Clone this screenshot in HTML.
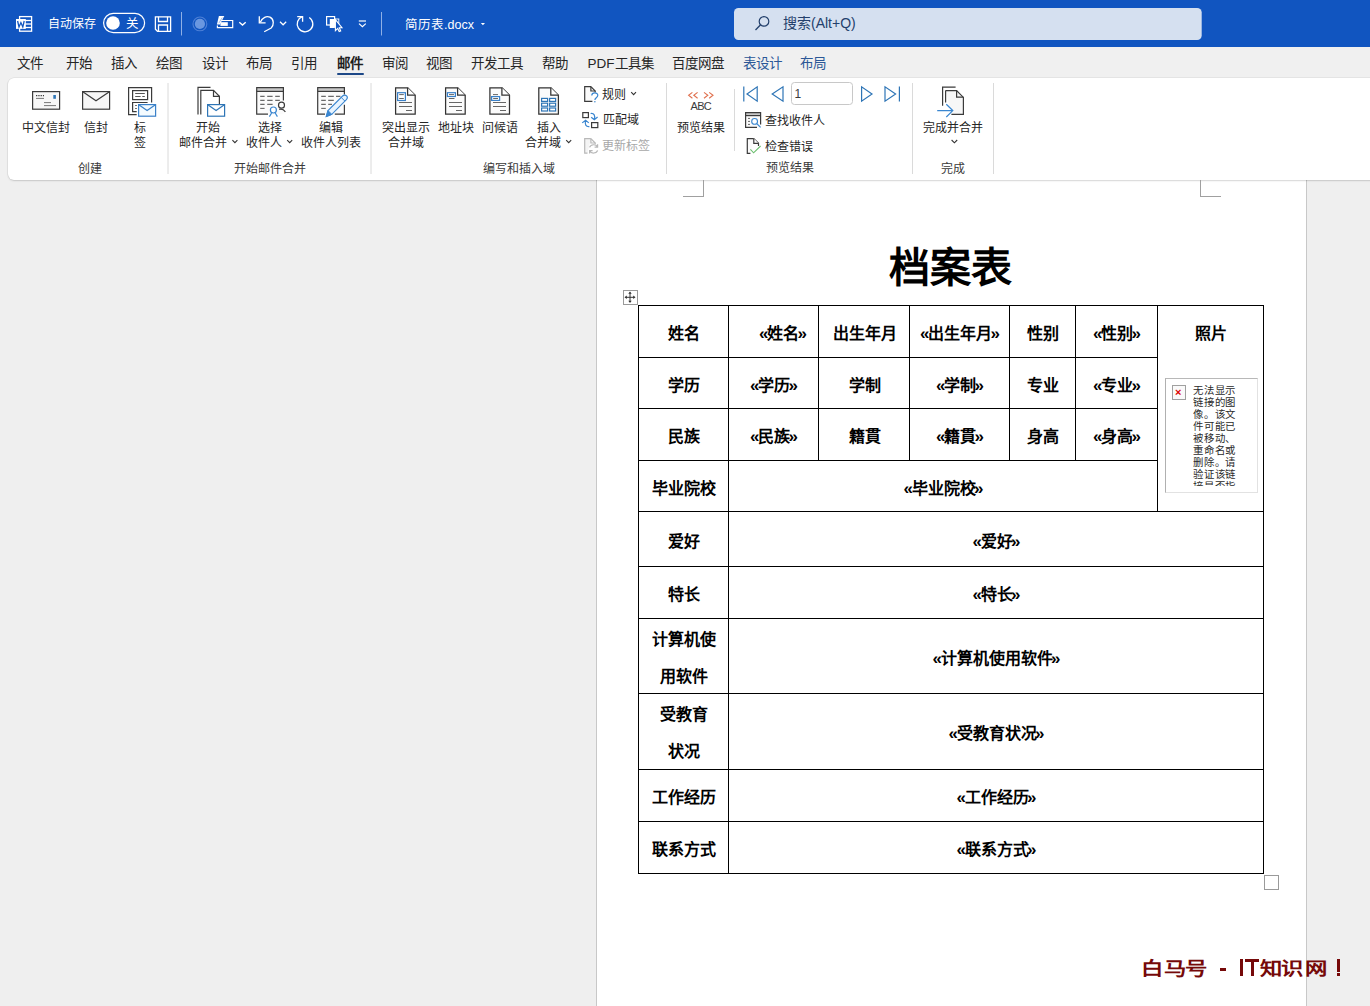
<!DOCTYPE html>
<html lang="zh-CN">
<head>
<meta charset="utf-8">
<style>
html,body{margin:0;padding:0}
body{width:1370px;height:1006px;overflow:hidden;position:relative;background:#efefef;font-family:"Liberation Sans",sans-serif;color:#262626}
.a{position:absolute;white-space:nowrap}
svg{position:absolute;overflow:visible}
#title{left:0;top:0;width:1370px;height:47px;background:#1155c0}
#tabs{left:0;top:47px;width:1370px;height:133px;background:#f0f0f0}
.tab{top:56px;font-size:13.5px;line-height:16px;color:#262626}
#ribbon{left:8px;top:78px;width:1380px;height:102px;background:#fff;border-radius:6px 0 0 6px;box-shadow:0 0 0 0.5px rgba(0,0,0,.09),0 1px 2px rgba(0,0,0,.13)}
.rt{font-size:12px;line-height:15px;color:#262626;text-align:center}
.gl{font-size:12px;line-height:15px;color:#3a3a3a}
.sep{width:1px;background:#d6d6d6}
#page{left:596px;top:180px;width:709px;height:830px;background:#fff;border-left:1px solid #c8c8c8;border-right:1px solid #c8c8c8}
.q1,.q2{font-style:normal;display:inline-block}
.q1{margin-right:-1.5px;font-size:17px;line-height:17px}
.q2{margin-left:-1.5px;font-size:17px;line-height:17px}
.wm{position:absolute;top:956.5px;width:18px;text-align:center;font-size:18px;line-height:24px;font-weight:900;color:#760909;transform:scale(1.24,1)}
.hl{position:absolute;height:1px;background:#000}
.vl{position:absolute;width:1px;background:#000}
.ct{position:absolute;font-size:16px;line-height:20px;margin:2px 0 0 1px;font-weight:bold;color:#000;text-align:center;white-space:nowrap}
</style>
</head>
<body>
<div id="title" class="a"></div>
<div id="tabs" class="a"></div>
<div id="page" class="a"></div>
<div id="ribbon" class="a"></div>




<!-- DOCUMENT -->
<div class="a" style="left:703px;top:180px;width:1px;height:16px;background:#a0a0a0"></div>
<div class="a" style="left:683px;top:196px;width:21px;height:1px;background:#a0a0a0"></div>
<div class="a" style="left:1200px;top:180px;width:1px;height:16px;background:#a0a0a0"></div>
<div class="a" style="left:1200px;top:196px;width:21px;height:1px;background:#a0a0a0"></div>
<div class="a" style="left:889px;top:242.5px;font-size:41px;line-height:50px;font-weight:900;color:#000">档案表</div>
<div class="a" style="left:623px;top:290px;width:13px;height:13px;border:1px solid #9a9a9a;background:#fff"></div>
<svg style="left:0;top:0" width="1370" height="1006">
<g stroke="#333" stroke-width="1" fill="#333">
<line x1="630" y1="292.5" x2="630" y2="302"/><line x1="625.5" y1="297.3" x2="634.5" y2="297.3"/>
<path d="M630 291.5 L628.3 293.8 H631.7 Z M630 303 L628.3 300.7 H631.7 Z M624.5 297.3 L626.8 295.6 V299 Z M635.5 297.3 L633.2 295.6 V299 Z" stroke="none"/>
</g></svg>
<div class="a" style="left:1264px;top:875px;width:13px;height:13px;border:1px solid #9a9a9a;background:#fff"></div>
<div class="hl" style="left:638px;top:305px;width:626px"></div>
<div class="hl" style="left:638px;top:873px;width:626px"></div>
<div class="hl" style="left:638px;top:357px;width:520px"></div>
<div class="hl" style="left:638px;top:408px;width:520px"></div>
<div class="hl" style="left:638px;top:460px;width:520px"></div>
<div class="hl" style="left:638px;top:511px;width:626px"></div>
<div class="hl" style="left:638px;top:566px;width:626px"></div>
<div class="hl" style="left:638px;top:618px;width:626px"></div>
<div class="hl" style="left:638px;top:693px;width:626px"></div>
<div class="hl" style="left:638px;top:769px;width:626px"></div>
<div class="hl" style="left:638px;top:821px;width:626px"></div>
<div class="vl" style="left:638px;top:305px;height:569px"></div>
<div class="vl" style="left:728px;top:305px;height:569px"></div>
<div class="vl" style="left:1263px;top:305px;height:569px"></div>
<div class="vl" style="left:818px;top:305px;height:156px"></div>
<div class="vl" style="left:909px;top:305px;height:156px"></div>
<div class="vl" style="left:1009px;top:305px;height:156px"></div>
<div class="vl" style="left:1075px;top:305px;height:156px"></div>
<div class="vl" style="left:1157px;top:305px;height:207px"></div>
<div class="ct" style="left:638px;width:90px;top:322.0px">姓名</div>
<div class="ct" style="left:737px;width:90px;top:322.0px"><i class="q1">«</i>姓名<i class="q2">»</i></div>
<div class="ct" style="left:818px;width:91px;top:322.0px">出生年月</div>
<div class="ct" style="left:909px;width:100px;top:322.0px"><i class="q1">«</i>出生年月<i class="q2">»</i></div>
<div class="ct" style="left:1009px;width:66px;top:322.0px">性别</div>
<div class="ct" style="left:1075px;width:82px;top:322.0px"><i class="q1">«</i>性别<i class="q2">»</i></div>
<div class="ct" style="left:1157px;width:106px;top:322.0px">照片</div>
<div class="ct" style="left:638px;width:90px;top:373.5px">学历</div>
<div class="ct" style="left:728px;width:90px;top:373.5px"><i class="q1">«</i>学历<i class="q2">»</i></div>
<div class="ct" style="left:818px;width:91px;top:373.5px">学制</div>
<div class="ct" style="left:909px;width:100px;top:373.5px"><i class="q1">«</i>学制<i class="q2">»</i></div>
<div class="ct" style="left:1009px;width:66px;top:373.5px">专业</div>
<div class="ct" style="left:1075px;width:82px;top:373.5px"><i class="q1">«</i>专业<i class="q2">»</i></div>
<div class="ct" style="left:638px;width:90px;top:425.0px">民族</div>
<div class="ct" style="left:728px;width:90px;top:425.0px"><i class="q1">«</i>民族<i class="q2">»</i></div>
<div class="ct" style="left:818px;width:91px;top:425.0px">籍貫</div>
<div class="ct" style="left:909px;width:100px;top:425.0px"><i class="q1">«</i>籍貫<i class="q2">»</i></div>
<div class="ct" style="left:1009px;width:66px;top:425.0px">身高</div>
<div class="ct" style="left:1075px;width:82px;top:425.0px"><i class="q1">«</i>身高<i class="q2">»</i></div>
<div class="ct" style="left:638px;width:90px;top:476.5px">毕业院校</div>
<div class="ct" style="left:728px;width:429px;top:476.5px"><i class="q1">«</i>毕业院校<i class="q2">»</i></div>
<div class="ct" style="left:638px;width:90px;top:529.5px">爱好</div>
<div class="ct" style="left:728px;width:535px;top:529.5px"><i class="q1">«</i>爱好<i class="q2">»</i></div>
<div class="ct" style="left:638px;width:90px;top:583.0px">特长</div>
<div class="ct" style="left:728px;width:535px;top:583.0px"><i class="q1">«</i>特长<i class="q2">»</i></div>
<div class="ct" style="left:638px;width:90px;top:619px;line-height:37px">计算机使<br>用软件</div>
<div class="ct" style="left:728px;width:535px;top:646.5px"><i class="q1">«</i>计算机使用软件<i class="q2">»</i></div>
<div class="ct" style="left:638px;width:90px;top:694.2px;line-height:37px">受教育<br>状况</div>
<div class="ct" style="left:728px;width:535px;top:722.0px"><i class="q1">«</i>受教育状况<i class="q2">»</i></div>
<div class="ct" style="left:638px;width:90px;top:786.0px">工作经历</div>
<div class="ct" style="left:728px;width:535px;top:786.0px"><i class="q1">«</i>工作经历<i class="q2">»</i></div>
<div class="ct" style="left:638px;width:90px;top:838.0px">联系方式</div>
<div class="ct" style="left:728px;width:535px;top:838.0px"><i class="q1">«</i>联系方式<i class="q2">»</i></div>
<div class="a" style="left:1165px;top:378px;width:91px;height:113px;border:1px solid #e2e2e2;border-top-color:#b8b8b8;border-left-color:#b0b0b0;background:#fff;overflow:hidden"></div>
<div class="a" style="left:1172px;top:385px;width:12px;height:13px;border:1px solid #a0a0a0;background:#fafafa"></div>
<div class="a" style="left:1175px;top:386px;font-size:11px;line-height:12px;color:#d00;font-weight:bold">×</div>
<div class="a" style="left:1193px;top:385px;width:46px;height:101px;overflow:hidden;font-size:10.4px;letter-spacing:0.8px;line-height:12px;color:#2a2a2a;white-space:normal;word-break:break-all">无法显示链接的图像。该文件可能已被移动、重命名或删除。请验证该链接是否指向正确的文件和位置。</div>
<div class="wm" style="left:1143.3px">白</div>
<div class="wm" style="left:1165.6px">马</div>
<div class="wm" style="left:1187.4px">号</div>
<div class="a" style="left:1220px;top:968px;width:6px;height:2.6px;background:#760909"></div>
<div class="a" style="left:1239.8px;top:959px;width:3.6px;height:17px;background:#760909"></div>
<div class="a" style="left:1245.2px;top:959px;width:14px;height:3.4px;background:#760909"></div><div class="a" style="left:1250.6px;top:959px;width:3.6px;height:17px;background:#760909"></div>
<div class="wm" style="left:1261.6px">知</div>
<div class="wm" style="left:1283.3px">识</div>
<div class="wm" style="left:1306.5px">网</div>
<div class="a" style="left:1337px;top:959px;width:3.2px;height:12.5px;background:#760909"></div><div class="a" style="left:1337px;top:973px;width:3.2px;height:3px;background:#760909"></div>

<!-- RIBBON -->
<svg style="left:0;top:0" width="1370" height="190">
<defs>
 <g id="doc"><path d="M0.6 0.6 H12.8 L20.2 8 V26.9 H0.6 Z" fill="#fbfbfb" stroke="#333" stroke-width="1.25"/><path d="M12.6 0.6 V8 H20.2" fill="#fff" stroke="#333" stroke-width="1.25"/></g>
</defs>
<g stroke-width="1.2" fill="none" stroke="#3b3b3b">
 <!-- separators -->
 <line x1="168" y1="83" x2="168" y2="174" stroke="#dadada" stroke-width="1"/>
 <line x1="371" y1="83" x2="371" y2="174" stroke="#dadada" stroke-width="1"/>
 <line x1="666.5" y1="83" x2="666.5" y2="174" stroke="#dadada" stroke-width="1"/>
 <line x1="734.5" y1="89" x2="734.5" y2="151" stroke="#dadada" stroke-width="1"/>
 <line x1="912.5" y1="83" x2="912.5" y2="174" stroke="#dadada" stroke-width="1"/>
 <line x1="993.5" y1="83" x2="993.5" y2="174" stroke="#dadada" stroke-width="1"/>
 <!-- 中文信封 -->
 <rect x="32.6" y="91.6" width="27" height="17.6" fill="#f7f7f7"/>
 <line x1="36" y1="95.6" x2="44" y2="95.6" stroke-dasharray="1.3 1"/>
 <line x1="36" y1="98.4" x2="44" y2="98.4" stroke="#777" stroke-width="1"/>
 <line x1="44" y1="102.6" x2="51" y2="102.6" stroke="#777" stroke-width="1"/>
 <line x1="44" y1="105.6" x2="56" y2="105.6" stroke="#777" stroke-width="1"/>
 <rect x="53.3" y="95" width="2.6" height="3.8" fill="#2e75b6" stroke="none"/>
 <!-- 信封 -->
 <rect x="82.6" y="91.6" width="27" height="17.6" fill="#f7f7f7"/>
 <path d="M82.8 91.8 L96 100.8 L109.4 91.8"/>
 <!-- 标签 -->
 <path d="M151.6 102.6 V87.6 H128.6 V114.6 H136.7"/>
 <rect x="132.6" y="90.6" width="15" height="9" fill="#fff"/>
 <g stroke="#555" stroke-width="1">
 <line x1="135.2" y1="93.5" x2="144.8" y2="93.5"/>
 <line x1="135.2" y1="96.5" x2="140.6" y2="96.5"/><line x1="142.3" y1="96.5" x2="144.8" y2="96.5"/>
 <line x1="135.2" y1="105.5" x2="136.8" y2="105.5"/><line x1="135.2" y1="108.5" x2="136.8" y2="108.5"/>
 </g>
 <path d="M147.6 102.5 H132.6 V111.6 H136.7"/>
 <rect x="138.6" y="104.6" width="17" height="11.6" fill="#f4fbff" stroke="#3a80c8"/>
 <path d="M138.8 104.8 L147.1 110.5 L155.4 104.8" stroke="#3a80c8"/>
 <!-- 开始邮件合并 -->
 <path d="M198 114.6 V87.4 H210.5"/>
 <path d="M200.8 114.6 V90.4 H213.5 L219.4 96.3 V104"/>
 <path d="M213.5 90.4 V96.3 H219.4"/>
 <rect x="207.6" y="104.6" width="17" height="11.6" fill="#fff" stroke="#2e75b6"/>
 <path d="M207.8 104.8 L216.1 110.5 L224.4 104.8" stroke="#2e75b6"/>
 <!-- 选择收件人 -->
 <rect x="256.6" y="87.6" width="27" height="26.6" fill="#fbfbfb" stroke="none"/>
 <rect x="256.8" y="87.8" width="26.6" height="3.4" fill="#c8c8c8" stroke="none"/>
 <path d="M283.4 100.4 V87.7 H256.7 V114.2 H268"/>
 <line x1="256.7" y1="91.4" x2="283.4" y2="91.4"/>
 <g stroke="#6a6a6a" stroke-width="1.1">
  <path d="M260.2 96.4 H264.6 M267.2 96.4 H272.6 M275.2 96.4 H279.8"/>
  <path d="M260.2 100.4 H264.6 M267.2 100.4 H272.6 M275.2 100.4 H279.8"/>
  <path d="M260.2 104.4 H264.6 M267.2 104.4 H272.6"/>
  <path d="M260.2 108.4 H264.6"/>
 </g>
 <circle cx="281.5" cy="105.2" r="3" fill="#fff"/>
 <path d="M279.2 109.4 C281.5 108.6 283.6 109.4 285.4 111.8"/>
 <circle cx="273.4" cy="110" r="3" fill="#fff" stroke="#3a86d0"/>
 <path d="M269.4 116.6 L271.6 113 M277.4 116.6 L275.2 113" stroke="#3a86d0"/>
 <!-- 编辑收件人列表 -->
 <rect x="317.6" y="87.6" width="27" height="26.6" fill="#fbfbfb" stroke="none"/>
 <rect x="317.8" y="87.8" width="26.6" height="3.4" fill="#c8c8c8" stroke="none"/>
 <path d="M344.4 94.6 V87.7 H317.7 V114.2 H325 M334.8 114.2 H344.4 V104.8"/>
 <line x1="317.7" y1="91.4" x2="344.4" y2="91.4"/>
 <g stroke="#6a6a6a" stroke-width="1.1">
  <path d="M321.2 96.4 H325.8 M328.2 96.4 H333.8 M336 96.4 H340.4"/>
  <path d="M321.2 100.4 H325.8 M328.2 100.4 H333.8"/>
  <path d="M321.2 104.4 H325.8 M328.2 104.4 H332"/>
  <path d="M321.2 108.4 H325.8"/>
 </g>
 <path d="M326.2 116.6 L328 110.6 L342.6 96 C343.8 94.8 345.6 94.8 346.6 95.9 C347.6 97 347.4 98.6 346.4 99.6 L331.8 114.4 Z" fill="#e8f4ff" stroke="#3a86d0" stroke-width="1.1"/>
 <path d="M326.2 116.6 L328 110.6 L331.8 114.4 Z" fill="#3a86d0" stroke="#3a86d0" stroke-width="1"/>
 <line x1="341.2" y1="97.4" x2="345" y2="101.2" stroke="#3a86d0" stroke-width="1"/>
 <!-- 突出显示合并域 -->
 <use href="#doc" x="395" y="87.2"/>
 <rect x="397.6" y="92.7" width="7.8" height="7.8" fill="#fff" stroke="#3a80c8"/>
 <g stroke="#666" stroke-width="1">
 <line x1="399.2" y1="94.6" x2="403.8" y2="94.6"/><line x1="399.2" y1="98.5" x2="403.8" y2="98.5"/>
 <line x1="399" y1="102.5" x2="412" y2="102.5"/><line x1="399" y1="106.5" x2="412" y2="106.5"/><line x1="406" y1="110.5" x2="412" y2="110.5"/>
 </g>
 <!-- 地址块 -->
 <use href="#doc" x="445" y="87.2"/>
 <rect x="447.4" y="92.7" width="8" height="3.8" fill="#fff" stroke="#3a80c8"/>
 <g stroke="#666" stroke-width="1">
 <line x1="449" y1="94.6" x2="454" y2="94.6"/><line x1="449" y1="98.5" x2="454.5" y2="98.5"/>
 <line x1="449" y1="102.5" x2="462" y2="102.5"/><line x1="449" y1="106.5" x2="462" y2="106.5"/><line x1="456" y1="110.5" x2="462" y2="110.5"/>
 </g>
 <!-- 问候语 -->
 <use href="#doc" x="489.3" y="87.2"/>
 <rect x="491.6" y="96.6" width="8" height="3.8" fill="#fff" stroke="#3a80c8"/>
 <g stroke="#666" stroke-width="1">
 <line x1="493" y1="94.6" x2="498" y2="94.6"/><line x1="493.2" y1="98.5" x2="498" y2="98.5"/>
 <line x1="493" y1="102.5" x2="506" y2="102.5"/><line x1="493" y1="106.5" x2="506" y2="106.5"/><line x1="500" y1="110.5" x2="506" y2="110.5"/>
 </g>
 <!-- 插入合并域 -->
 <use href="#doc" x="538.2" y="87.2"/>
 <g fill="#fff" stroke="#2e75b6">
  <rect x="541.6" y="98.4" width="6" height="3"/><rect x="549.6" y="98.4" width="6" height="3"/>
  <rect x="541.6" y="103.2" width="6" height="3"/><rect x="549.6" y="103.2" width="6" height="3"/>
  <rect x="541.6" y="108" width="6" height="3"/><rect x="549.6" y="108" width="6" height="3"/>
 </g>
 <!-- 规则 -->
 <path d="M591 86.7 H584.7 V101.3 H592.4" fill="#fafafa"/>
 <path d="M590.9 86.7 L595.2 91 V92.4" />
 <path d="M590.9 86.7 V91 H595.2" />
 <path d="M591.8 95.4 C591.8 92.2 597.8 92 597.8 95.3 C597.8 97.8 594.9 97.8 594.9 100" stroke="#3a86d0"/>
 <circle cx="594.9" cy="101.7" r="0.75" fill="#3a86d0" stroke="none"/>
 <!-- 匹配域 -->
 <rect x="582.8" y="112.6" width="5.6" height="5" fill="#fff"/>
 <rect x="591.6" y="122.6" width="6.2" height="5" fill="#fff"/>
 <path d="M590.6 113.5 C594.2 113 595.4 115.6 594.3 119.4 M591.2 117.2 L594.3 119.8 L597.6 117" stroke="#3a86d0"/>
 <path d="M589.4 126.6 C585.8 127 584.6 124.4 585.6 120.6 M582.2 122.9 L585.6 120.2 L588.8 122.9" stroke="#3a86d0"/>
 <!-- 更新标签 (disabled) -->
 <g stroke="#b8b8b8">
 <path d="M590.9 138.7 H584.7 V153.2 H587.5" fill="#f4f4f4"/>
 <path d="M590.9 138.7 L595.2 143 V144.2"/>
 <path d="M590.9 138.7 V143 H595.2"/>
 <path d="M589.6 147.4 C590.6 144.2 596 143.8 597.4 146.8 M597.6 144.2 V147.2 H594.6"/>
 <path d="M597.6 150.4 C596.6 153.6 591.2 154 589.8 151 M589.6 153.6 V150.6 H592.6"/>
 </g>
 <!-- 预览结果 -->
 <g stroke="#e0714f" stroke-width="1.1">
  <path d="M692.4 92.4 L688.6 95.3 L692.4 98.2 M697.6 92.4 L693.8 95.3 L697.6 98.2"/>
  <path d="M704 92.4 L707.8 95.3 L704 98.2 M709.2 92.4 L713 95.3 L709.2 98.2"/>
 </g>
 <!-- nav -->
 <g stroke="#2e75b6" stroke-width="1.2">
  <line x1="743.8" y1="86.4" x2="743.8" y2="101.6"/>
  <path d="M757.2 86.8 V101.2 L747 94 Z" fill="#fff"/>
  <path d="M783 86.8 V101.2 L772.2 94 Z" fill="#fff"/>
  <path d="M861.6 86.8 V101.2 L872 94 Z" fill="#fff"/>
  <path d="M885 86.8 V101.2 L895.6 94 Z" fill="#fff"/>
  <line x1="899.4" y1="86.4" x2="899.4" y2="101.6"/>
 </g>
 <rect x="791.5" y="82.5" width="61" height="22" rx="3" fill="#fff" stroke="#c8c8c8" stroke-width="1"/>
 <!-- 查找收件人 -->
 <rect x="745.6" y="112.6" width="15" height="14.8" fill="#fbfbfb" stroke="none"/>
 <rect x="745.8" y="112.8" width="14.6" height="2.4" fill="#c8c8c8" stroke="none"/>
 <path d="M760.6 124.5 V112.6 H745.6 V127.4 H757"/>
 <line x1="745.6" y1="115.6" x2="760.6" y2="115.6"/>
 <g stroke="#666" stroke-width="1"><line x1="748" y1="118.4" x2="750" y2="118.4"/><line x1="748" y1="121.4" x2="750" y2="121.4"/><line x1="748" y1="124.4" x2="750" y2="124.4"/></g>
 <circle cx="754.6" cy="121.4" r="2.9" fill="#fff" stroke="#3a86d0" stroke-width="1.1"/>
 <line x1="756.8" y1="123.6" x2="760.6" y2="127.4" stroke="#3a86d0" stroke-width="1.2"/>
 <!-- 检查错误 -->
 <path d="M753.8 138.6 H747.3 V153.3 H750.4" fill="#fbfbfb"/>
 <path d="M753.8 138.6 L758.5 143.3 V146"/>
 <path d="M753.8 138.6 V143.3 H758.5" fill="#fff"/>
 <path d="M750.4 149.4 L753.6 152.8 L760.6 146" stroke="#6cbf6f" stroke-width="1.1"/>
 <!-- 完成并合并 -->
 <path d="M942.6 105.8 V87.2 H955.6"/>
 <path d="M945.6 90.6 H956.6 L963.4 97.4 V114.4 H951.4" fill="#f7f7f7"/>
 <path d="M945.6 102.6 V90.6"/>
 <path d="M956.6 90.6 V97.2 H963.4"/>
 <path d="M937.2 110.6 H952.6 M946.3 104.2 L952.8 110.6 L946.3 117" stroke="#3a86d0" stroke-width="1.2"/>
</g>
<g fill="none" stroke="#333" stroke-width="1.1">
 <path d="M232.4 140.2 L234.9 142.7 L237.4 140.2"/>
 <path d="M287.2 140.2 L289.7 142.7 L292.2 140.2"/>
 <path d="M566.2 140.2 L568.7 142.7 L571.2 140.2"/>
 <path d="M631.2 92.2 L633.6 94.6 L636 92.2"/>
 <path d="M951.6 140 L954.4 142.8 L957.2 140" stroke="#333" stroke-width="1.1"/>
</g>
</svg>
<div class="a rt" style="left:22px;top:121px">中文信封</div>
<div class="a rt" style="left:84px;top:121px">信封</div>
<div class="a rt" style="left:133.5px;top:121px;line-height:14.6px">标<br>签</div>
<div class="a gl" style="left:78px;top:162px">创建</div>
<div class="a rt" style="left:196px;top:121px">开始</div>
<div class="a rt" style="left:179px;top:136px">邮件合并</div>
<div class="a rt" style="left:258px;top:121px">选择</div>
<div class="a rt" style="left:246px;top:136px">收件人</div>
<div class="a rt" style="left:318.5px;top:121px">编辑</div>
<div class="a rt" style="left:301px;top:136px">收件人列表</div>
<div class="a gl" style="left:233.5px;top:162px">开始邮件合并</div>
<div class="a rt" style="left:381.5px;top:121px">突出显示</div>
<div class="a rt" style="left:388px;top:136px">合并域</div>
<div class="a rt" style="left:438px;top:121px">地址块</div>
<div class="a rt" style="left:481.5px;top:121px">问候语</div>
<div class="a rt" style="left:537px;top:121px">插入</div>
<div class="a rt" style="left:525px;top:136px">合并域</div>
<div class="a gl" style="left:483px;top:162px">编写和插入域</div>
<div class="a rt" style="left:601.5px;top:87.5px">规则</div>
<div class="a rt" style="left:602.5px;top:113px">匹配域</div>
<div class="a rt" style="left:602px;top:139px;color:#a8a8a8">更新标签</div>
<div class="a" style="left:690.5px;top:99px;font-size:11px;line-height:14px;color:#3b3b3b;letter-spacing:-0.7px">ABC</div>
<div class="a rt" style="left:676.5px;top:121px">预览结果</div>
<div class="a" style="left:794.5px;top:86px;font-size:12px;line-height:16px;color:#3b3b3b">1</div>
<div class="a rt" style="left:765px;top:114px">查找收件人</div>
<div class="a rt" style="left:765px;top:139.5px">检查错误</div>
<div class="a gl" style="left:765.5px;top:161px">预览结果</div>
<div class="a rt" style="left:922.5px;top:121px">完成并合并</div>
<div class="a gl" style="left:941px;top:162px">完成</div>

<!-- TABS -->
<div class="a tab" style="left:16.8px;">文件</div>
<div class="a tab" style="left:66.1px;">开始</div>
<div class="a tab" style="left:111.2px;">插入</div>
<div class="a tab" style="left:156.3px;">绘图</div>
<div class="a tab" style="left:201.6px;">设计</div>
<div class="a tab" style="left:246.3px;">布局</div>
<div class="a tab" style="left:291.1px;">引用</div>
<div class="a tab" style="left:336.5px;font-weight:bold;color:#1f1f1f;">邮件</div>
<div class="a tab" style="left:381.9px;">审阅</div>
<div class="a tab" style="left:426.2px;">视图</div>
<div class="a tab" style="left:470.9px;">开发工具</div>
<div class="a tab" style="left:542.2px;">帮助</div>
<div class="a tab" style="left:587.5px;">PDF工具集</div>
<div class="a tab" style="left:672.0px;">百度网盘</div>
<div class="a tab" style="left:742.6px;color:#2b5797;">表设计</div>
<div class="a tab" style="left:800.1px;color:#2b5797;">布局</div>
<div class="a" style="left:337px;top:73px;width:27px;height:2.4px;background:#1d4887;border-radius:1px"></div>
<!-- TITLE BAR -->
<svg style="left:0;top:0" width="1370" height="47">
 <!-- word icon -->
 <g fill="none" stroke="#fff" stroke-width="1.3">
  <rect x="19.6" y="16.6" width="12" height="14.6"/>
  <line x1="24" y1="20.5" x2="31.5" y2="20.5"/>
  <line x1="24" y1="24" x2="31.5" y2="24"/>
  <line x1="24" y1="27.5" x2="31.5" y2="27.5"/>
 </g>
 <rect x="16" y="19" width="9.8" height="9.9" fill="#fff"/>
 <path d="M17.6 21 L19 27 L20.9 22.6 L22.8 27 L24.2 21" fill="none" stroke="#1155c0" stroke-width="1.3"/>
 <!-- toggle -->
 <rect x="103.6" y="13.4" width="41" height="19.2" rx="9.6" fill="none" stroke="#fff" stroke-width="1.2"/>
 <circle cx="113" cy="23" r="6.8" fill="#fff"/>
 <!-- save icon -->
 <g fill="none" stroke="#fff" stroke-width="1.3">
  <path d="M155.4 16.8 H170.6 V31.3 H157.5 L155.4 29.2 Z"/>
  <path d="M158.5 16.8 V21.5 H167.5 V16.8"/>
  <path d="M158.5 31.3 V25 H167.5 V31.3"/>
 </g>
 <line x1="181.5" y1="12" x2="181.5" y2="35.5" stroke="#8fb0e6" stroke-width="1"/>
 <!-- dim circle -->
 <circle cx="199.9" cy="23.9" r="6.9" fill="none" stroke="#4c7fd6" stroke-width="1.1"/>
 <circle cx="199.9" cy="23.9" r="5.1" fill="#6a97e0"/>
 <!-- format icon -->
 <path d="M221.6 20.5 H232.7 V27.6 H217.4 V25.6" fill="none" stroke="#fff" stroke-width="1.2"/>
 <rect x="220.4" y="22.2" width="7.4" height="3.7" fill="#fff"/>
 <path d="M218.9 16.1 H224.3 L219.9 24.5 H216.9 Z" fill="#fff"/>
 <path d="M222.2 17.6 L218.8 23.2" stroke="#8fb0e6" stroke-width="0.8"/>
 <path d="M239.3 22.2 L242.5 25 L245.7 22.2" fill="none" stroke="#fff" stroke-width="1.4"/>
 <!-- undo -->
 <path d="M259.3 16.2 V22.9 H265.6" fill="none" stroke="#fff" stroke-width="1.3"/>
 <path d="M260.3 22.2 C262.5 17.5 266.5 15.6 270 17.2 C274.5 19.5 273.8 25.5 271.2 28 L264.2 31.8" fill="none" stroke="#fff" stroke-width="1.3"/>
 <path d="M280 21.8 L283.1 24.8 L286.2 21.8" fill="none" stroke="#fff" stroke-width="1.2"/>
 <!-- redo -->
 <path d="M309.25 17.46 A7.8 7.8 0 1 1 302.3 16.7" fill="none" stroke="#fff" stroke-width="1.3"/>
 <path d="M297.2 16.6 H302.6 V21.8" fill="none" stroke="#fff" stroke-width="1.3"/>
 <!-- touch icon -->
 <rect x="326.6" y="16.6" width="8" height="8.4" fill="none" stroke="#fff" stroke-width="1.2"/>
 <rect x="329.8" y="19" width="5" height="9" fill="#fff"/>
 <rect x="334.6" y="19" width="4.2" height="8" fill="none" stroke="#fff" stroke-width="0.9"/>
 <path d="M335.4 19.6 V30.6 L337.7 28.4 L339.2 31.6 L340.7 31 L339.3 27.8 L342 27.7 Z" fill="#1155c0" stroke="#fff" stroke-width="1.1"/>
 <!-- more -->
 <line x1="358.8" y1="21" x2="366" y2="21" stroke="#fff" stroke-width="1.2"/>
 <path d="M359 23.6 L362.4 26.6 L365.8 23.6" fill="none" stroke="#fff" stroke-width="1.2"/>
 <line x1="381.5" y1="12" x2="381.5" y2="35.5" stroke="#8fb0e6" stroke-width="1"/>
 <path d="M480.8 23 L485 23 L482.9 25.3 Z" fill="#fff"/>
 <!-- search box -->
 <rect x="734" y="8" width="467.7" height="32" rx="4.5" fill="#d5e0f0"/>
 <circle cx="764" cy="21.4" r="4.8" fill="none" stroke="#24406c" stroke-width="1.2"/>
 <line x1="760.6" y1="24.8" x2="755.5" y2="30" stroke="#24406c" stroke-width="1.3"/>
</svg>
<div class="a" style="left:48px;top:16px;font-size:12px;line-height:16px;color:#fff">自动保存</div>
<div class="a" style="left:126px;top:16px;font-size:12.5px;line-height:16px;color:#fff">关</div>
<div class="a" style="left:405px;top:16px;font-size:12.5px;line-height:18px;color:#fff">简历表.docx</div>
<div class="a" style="left:783px;top:14px;font-size:14px;line-height:18px;color:#24406c">搜索(Alt+Q)</div>

</body>
</html>
